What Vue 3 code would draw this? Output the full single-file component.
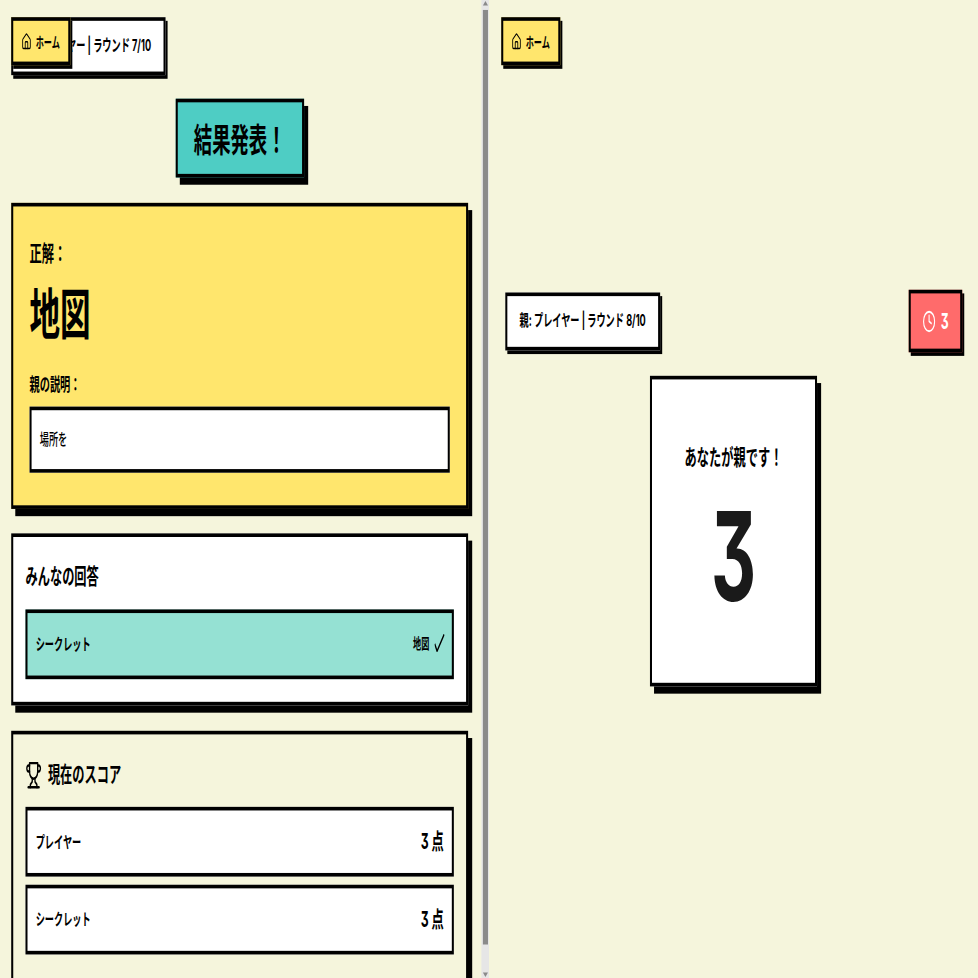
<script setup>
const answers = [{ name: 'シークレット', answer: '地図' }];
const scores = [
  { name: 'プレイヤー', points: 3 },
  { name: 'シークレット', points: 3 },
];
</script>

<template>
  <div class="stage">
    <section class="panel panel-left">
      <div class="content">
        <a class="home">
          <svg class="icon-home" viewBox="0 0 24 24" fill="none" stroke="currentColor" stroke-width="2" stroke-linecap="round" stroke-linejoin="round">
            <path d="M15 21v-8a1 1 0 0 0-1-1h-4a1 1 0 0 0-1 1v8" />
            <path d="M3 10a2 2 0 0 1 .709-1.528l7-5.999a2 2 0 0 1 2.582 0l7 5.999A2 2 0 0 1 21 10v9a2 2 0 0 1-2 2H5a2 2 0 0 1-2-2z" />
          </svg>
          ホーム
        </a>
        <div class="info">親: プレイヤー | ラウンド 7/10</div>
        <h1 class="title">結果発表！</h1>

        <div class="card card-answer">
          <p class="label">正解：</p>
          <p class="word">地図</p>
          <p class="label-small">親の説明：</p>
          <div class="hint">場所を</div>
        </div>

        <div class="card card-list">
          <h2 class="heading">みんなの回答</h2>
          <div v-for="item in answers" :key="item.name" class="row row-correct">
            <span class="name">{{ item.name }}</span>
            <span class="result">
              <span class="result-word">{{ item.answer }}</span>
              <svg class="tick" viewBox="0 0 20 20" fill="none" stroke="currentColor" stroke-width="2.4">
                <polyline points="0.5 11 5 19 19 0.5" />
              </svg>
            </span>
          </div>
        </div>

        <div class="card card-score">
          <h2 class="heading heading-score">
            <svg class="icon-trophy" viewBox="0 0 24 24" fill="none" stroke="currentColor" stroke-width="2" stroke-linecap="round" stroke-linejoin="round">
              <path d="M6 9H4.5a2.5 2.5 0 0 1 0-5H6" />
              <path d="M18 9h1.5a2.5 2.5 0 0 0 0-5H18" />
              <path d="M4 22h16" />
              <path d="M10 14.66V17c0 .55-.47.98-.97 1.21C7.85 18.75 7 20.24 7 22" />
              <path d="M14 14.66V17c0 .55.47.98.97 1.21C16.15 18.75 17 20.24 17 22" />
              <path d="M18 2H6v7a6 6 0 0 0 12 0V2Z" />
            </svg>
            現在のスコア
          </h2>
          <div class="score-list">
            <div v-for="item in scores" :key="item.name" class="row">
              <span class="name">{{ item.name }}</span>
              <span class="points">{{ item.points }} 点</span>
            </div>
          </div>
        </div>
      </div>
      <div class="scrollbar">
        <span class="arrow arrow-up"></span>
        <span class="thumb"></span>
        <span class="arrow arrow-down"></span>
      </div>
    </section>

    <section class="panel panel-right">
      <a class="home home-right">
        <svg class="icon-home" viewBox="0 0 24 24" fill="none" stroke="currentColor" stroke-width="2" stroke-linecap="round" stroke-linejoin="round">
          <path d="M15 21v-8a1 1 0 0 0-1-1h-4a1 1 0 0 0-1 1v8" />
          <path d="M3 10a2 2 0 0 1 .709-1.528l7-5.999a2 2 0 0 1 2.582 0l7 5.999A2 2 0 0 1 21 10v9a2 2 0 0 1-2 2H5a2 2 0 0 1-2-2z" />
        </svg>
        ホーム
      </a>
      <div class="top-row">
        <div class="info">親: プレイヤー | ラウンド 8/10</div>
        <div class="timer">
          <svg class="icon-clock" viewBox="0 0 24 24" fill="none" stroke="currentColor" stroke-width="2" stroke-linecap="round" stroke-linejoin="round">
            <circle cx="12" cy="12" r="10" />
            <polyline points="12 6 12 12 16 14" />
          </svg>
          <span>3</span>
        </div>
      </div>
      <div class="count-card">
        <p class="count-label">あなたが親です！</p>
        <p class="count">3</p>
      </div>
    </section>
  </div>
</template>

<style>
html,
body {
  margin: 0;
  overflow: hidden;
  background: #f5f5dc;
}
</style>

<style scoped>
/* the reference is a 1920x1080 page squeezed into a square */
.stage {
  display: flex;
  width: 1920px;
  height: 1080px;
  overflow: hidden;
  transform: scale(0.509375, 0.90556);
  transform-origin: 0 0;
  background: #f5f5dc;
  color: #000;
  font-family: Inter, "Noto Sans CJK JP", sans-serif;
  font-weight: 700;
  font-feature-settings: "cv09";
}

p,
h1,
h2 {
  margin: 0;
}

.panel {
  position: relative;
  width: 960px;
  height: 1080px;
  overflow: hidden;
}

.panel-left {
  display: flex;
}

.content {
  position: relative;
  flex: 1;
  min-width: 0;
  padding: 19px 26px 0 22px;
}

.scrollbar {
  display: flex;
  flex-direction: column;
  align-items: center;
  width: 15px;
  flex: none;
  background: #e6e6e6;
}

.thumb {
  width: 10px;
  height: 1032px;
  margin: 0 0 auto;
  background: #8a8a8a;
}

.arrow {
  width: 0;
  height: 0;
  border-left: 5px solid transparent;
  border-right: 5px solid transparent;
}

.arrow-up {
  margin: 1px 0 5px;
  border-bottom: 5px solid #8a8a8a;
}

.arrow-down {
  margin: 0 0 1px;
  border-top: 5px solid #8a8a8a;
}

.home {
  position: absolute;
  top: 19px;
  left: 22px;
  z-index: 2;
  display: flex;
  align-items: center;
  gap: 8px;
  height: 53px;
  padding: 0 16px;
  box-sizing: border-box;
  background: #ffe66d;
  border: 4px solid #000;
  box-shadow: 4px 4px 0 #000;
  font-size: 16px;
}

.home-right {
  left: 24px;
}

.icon-home {
  width: 20px;
  height: 20px;
}

.info {
  display: inline-block;
  box-sizing: border-box;
  height: 64px;
  padding: 0 24px;
  background: #fff;
  border: 4px solid #000;
  box-shadow: 4px 4px 0 #000;
  font-size: 18px;
  line-height: 54px;
  white-space: nowrap;
}

.title {
  box-sizing: border-box;
  width: 252px;
  height: 87px;
  margin: 26px auto 0;
  background: #4ecdc4;
  border: 4px solid #000;
  box-shadow: 8px 8px 0 #000;
  font-size: 36px;
  line-height: 85px;
  text-align: center;
}

.card {
  box-sizing: border-box;
  margin-top: 28px;
  border: 4px solid #000;
  box-shadow: 8px 8px 0 #000;
}

.card-answer {
  height: 338px;
  padding: 32px;
  background: #ffe66d;
}

.label {
  font-size: 24px;
  line-height: 40px;
}

.word {
  margin-top: 7px;
  font-size: 60px;
  line-height: 80px;
}

.label-small {
  margin-top: 23px;
  font-size: 20px;
  line-height: 30px;
}

.hint {
  box-sizing: border-box;
  height: 73px;
  margin-top: 9px;
  padding: 0 16px;
  background: #fff;
  border: 4px solid #000;
  font-size: 18px;
  font-weight: 500;
  line-height: 63px;
}

.card-list {
  height: 190px;
  margin-top: 27px;
  padding: 24px;
  background: #fff;
}

.card-score {
  height: 360px;
  padding: 24px;
}

.heading {
  margin-bottom: 16px;
  font-size: 24px;
  line-height: 40px;
}

.heading-score {
  display: flex;
  align-items: center;
  gap: 12px;
  margin-bottom: 14px;
  line-height: 42px;
}

.icon-trophy {
  width: 32px;
  height: 32px;
}

.score-list {
  display: flex;
  flex-direction: column;
  gap: 9px;
}

.row {
  display: flex;
  align-items: center;
  justify-content: space-between;
  box-sizing: border-box;
  height: 77px;
  padding: 0 16px 4px;
  background: #fff;
  border: 4px solid #000;
  font-size: 18px;
}

.row-correct {
  background: #95e1d3;
}

.result {
  display: flex;
  align-items: center;
  gap: 10px;
}

.result-word {
  font-size: 16px;
}

.tick {
  width: 20px;
  height: 20px;
  margin-right: -2px;
}

.points {
  font-size: 24px;
}

.panel-right {
  display: flex;
  flex-direction: column;
  align-items: center;
  justify-content: center;
  gap: 26px;
  box-sizing: border-box;
  padding: 0 31px 2px 24px;
}

.top-row {
  display: flex;
  align-items: center;
  justify-content: space-between;
  align-self: stretch;
  padding-left: 8px;
}

.timer {
  display: flex;
  align-items: center;
  justify-content: center;
  gap: 10px;
  box-sizing: border-box;
  width: 105px;
  height: 69px;
  background: #ff6b6b;
  border: 4px solid #000;
  box-shadow: 4px 4px 0 #000;
  color: #fff;
  font-size: 24px;
}

.icon-clock {
  width: 26px;
  height: 26px;
}

.count-card {
  display: flex;
  flex-direction: column;
  align-items: center;
  justify-content: center;
  box-sizing: border-box;
  width: 328px;
  height: 343px;
  margin-left: 7px;
  background: #fff;
  border: 4px solid #000;
  box-shadow: 8px 8px 0 #000;
}

.count-label {
  font-size: 24px;
  line-height: 36px;
}

.count {
  margin-top: 18px;
  color: #1a1a1a;
  font-size: 137px;
  line-height: 144px;
}
</style>
